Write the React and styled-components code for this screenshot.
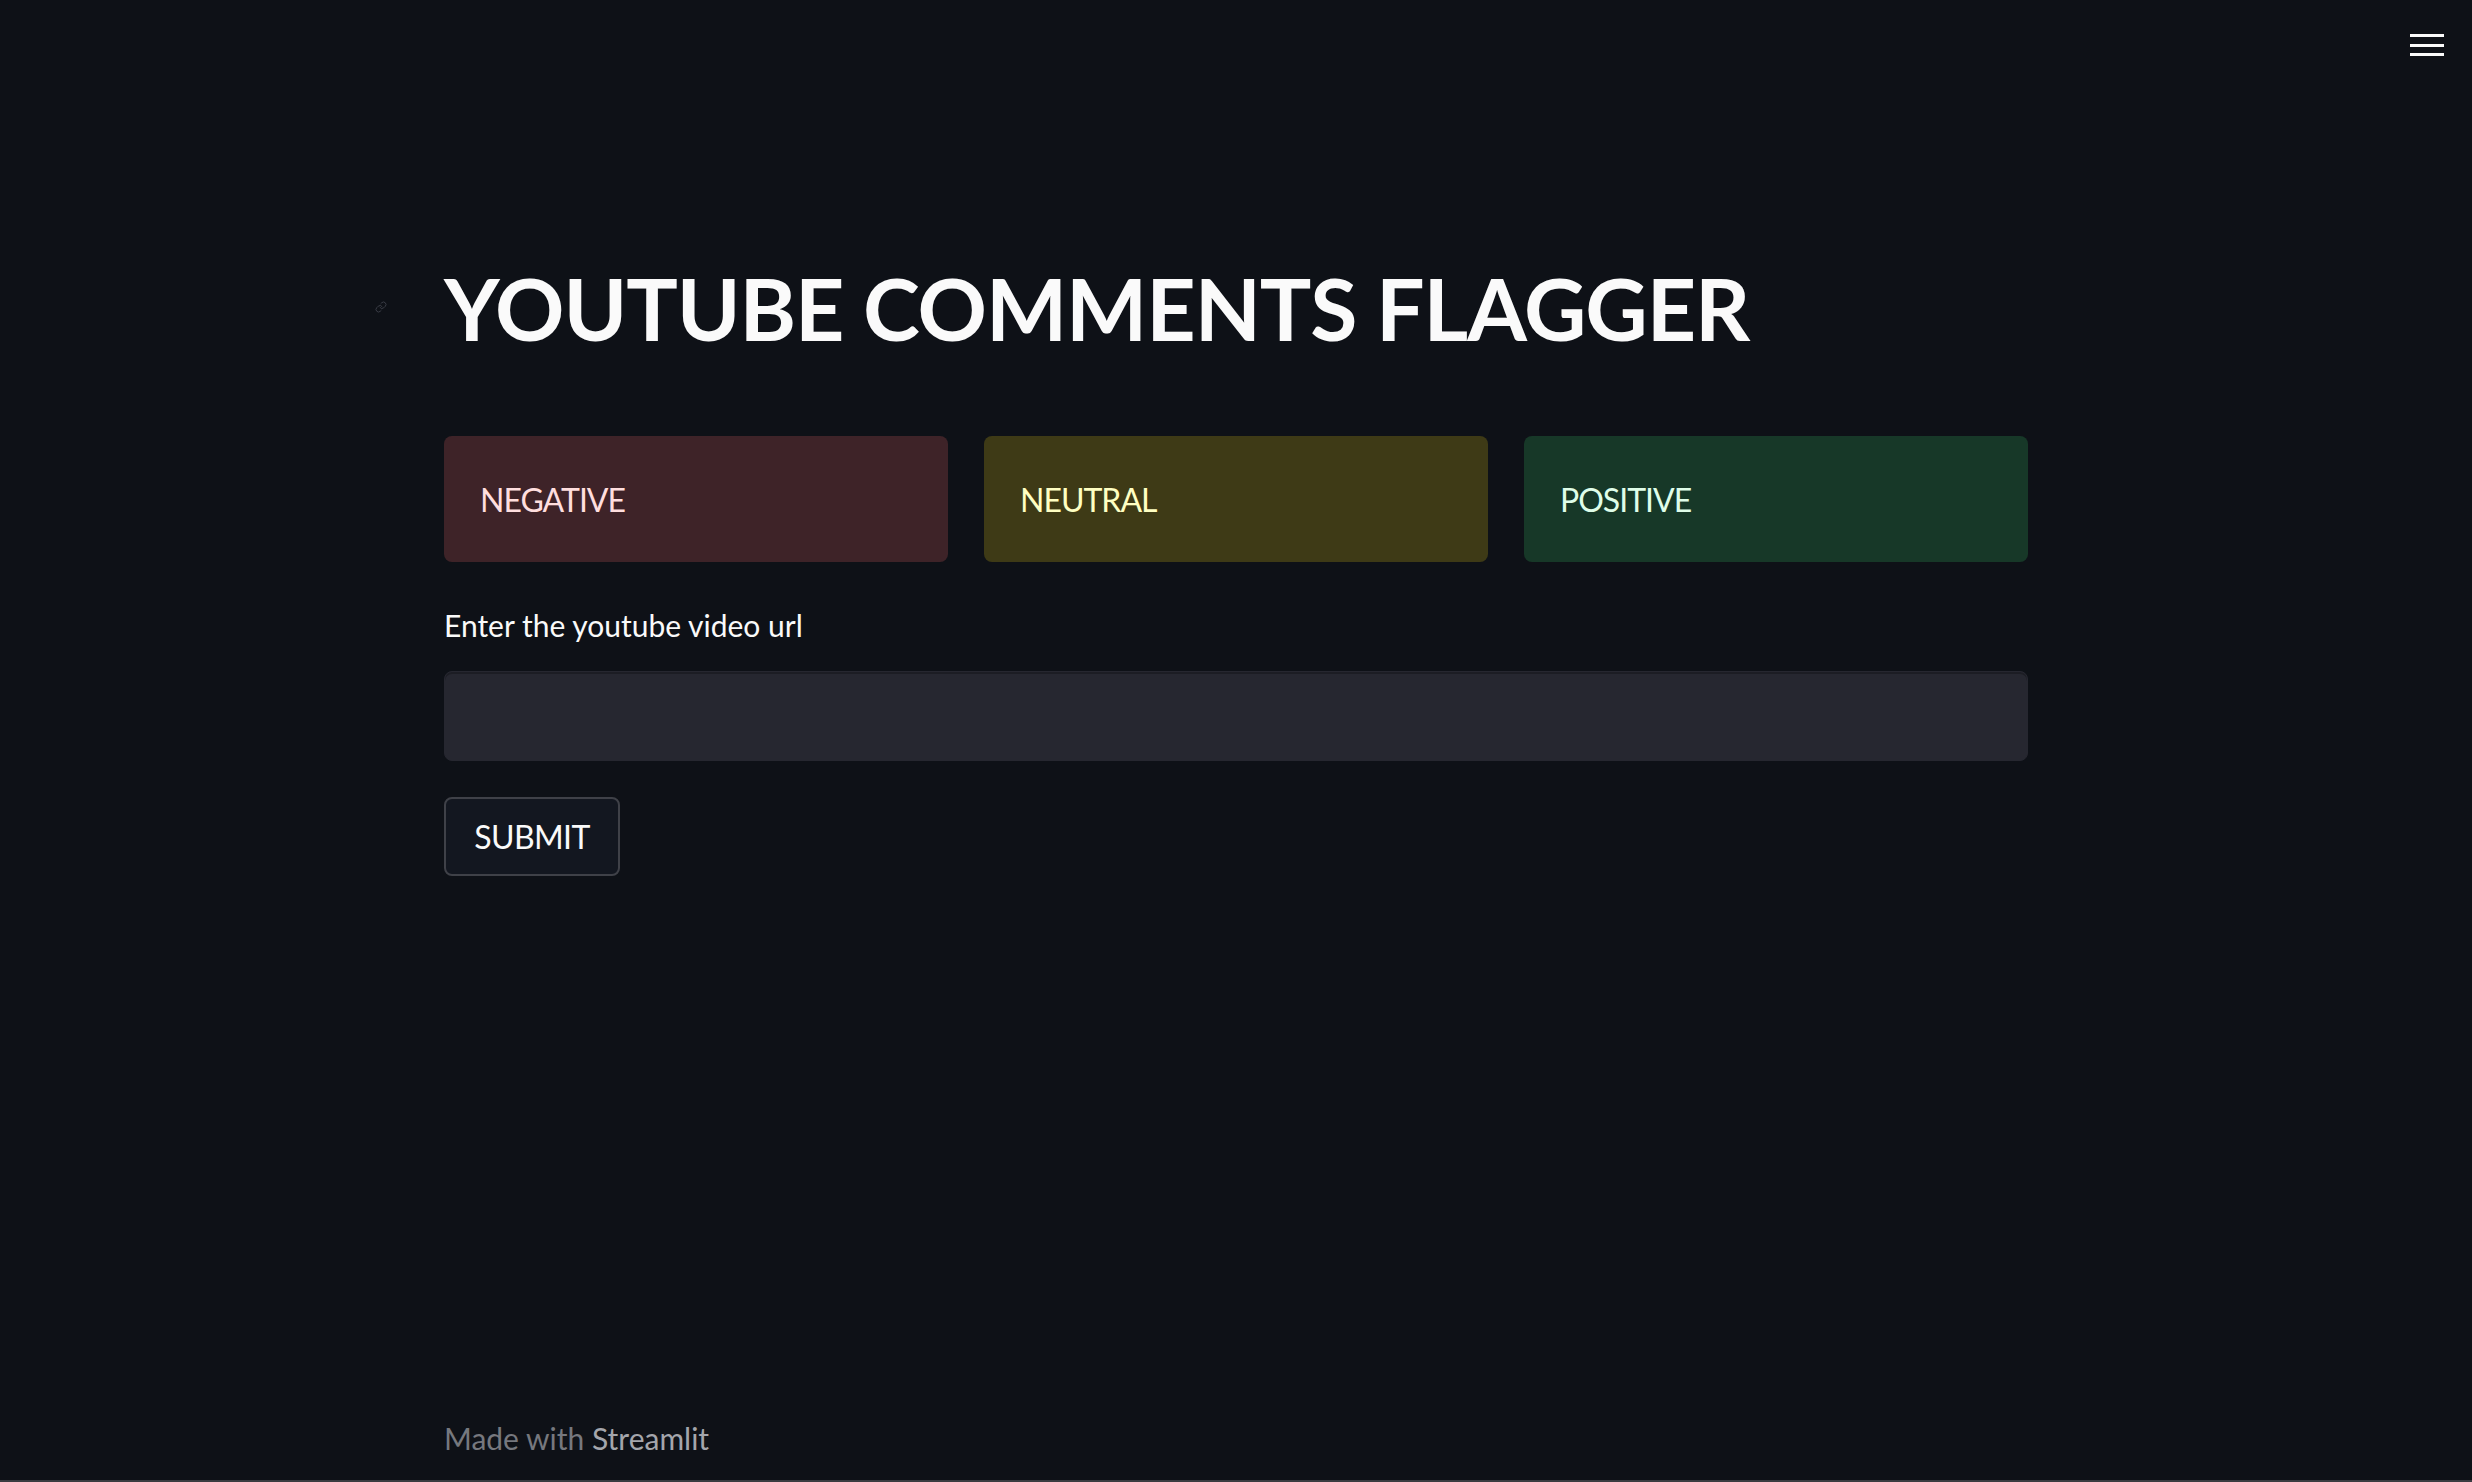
import React from "react";
import styled, { createGlobalStyle } from "styled-components";
import { Link } from "lucide-react";

const GlobalStyle = createGlobalStyle`
  html, body {
    margin: 0;
    padding: 0;
    background: #0e1117;
  }
  body {
    font-family: Lato, "Open Sans", sans-serif;
    color: #fafafa;
  }
  * {
    box-sizing: border-box;
  }
`;

const AppShell = styled.div`
  display: flex;
  flex-direction: column;
  min-height: 100vh;
  background: #0e1117;
  border-bottom: 2px solid #3a3b40;
`;

const Header = styled.header`
  display: flex;
  justify-content: flex-end;
  height: 90px;
  padding: 34px 28px 0 0;
`;

const MenuButton = styled.button`
  display: flex;
  flex-direction: column;
  gap: 6.5px;
  width: 34px;
  height: 24px;
  padding: 0;
  border: none;
  background: transparent;
  cursor: pointer;
`;

const MenuBar = styled.span`
  display: block;
  width: 34px;
  height: 3px;
  background: #fafafa;
`;

const Main = styled.main`
  flex: 1;
  width: 1584px;
  margin: 0 auto;
  padding-top: 166px;
`;

const Title = styled.h1`
  position: relative;
  margin: 0 0 77px;
  font-size: 86px;
  line-height: 1.2;
  font-weight: 700;
  letter-spacing: -1.1px;
  color: #fafafa;
`;

const Anchor = styled.a`
  position: absolute;
  left: -69px;
  top: 45px;
  display: flex;
  color: #3a3d46;
`;

const AlertRow = styled.div`
  display: grid;
  grid-template-columns: repeat(3, 1fr);
  gap: 36px;
  margin-bottom: 45px;
`;

const tones = {
  negative: { bg: "rgba(255, 108, 108, 0.2)", fg: "#ffdede" },
  neutral: { bg: "rgba(255, 227, 18, 0.2)", fg: "#ffffc2" },
  positive: { bg: "rgba(61, 213, 109, 0.2)", fg: "#dffde9" },
};

const Alert = styled.div`
  display: flex;
  align-items: center;
  height: 126px;
  padding: 0 36px;
  border-radius: 8px;
  background: ${(p) => tones[p.$tone].bg};
  color: ${(p) => tones[p.$tone].fg};
  font-size: 32px;
  letter-spacing: -1px;
`;

const Label = styled.label`
  display: block;
  margin-bottom: 28px;
  font-size: 30px;
  line-height: 1.2;
  color: #fafafa;
`;

const UrlInput = styled.input`
  display: block;
  width: 100%;
  height: 90px;
  margin-bottom: 36px;
  padding: 0 24px;
  border: 1px solid #262730;
  border-radius: 8px;
  background: #262730;
  box-shadow: inset 0 2px 0 #1c1d24;
  color: #fafafa;
  font-family: inherit;
  font-size: 33px;
  outline: none;
`;

const SubmitButton = styled.button`
  width: 176px;
  height: 79px;
  border: 2px solid #3f4148;
  border-radius: 8px;
  background: #131720;
  color: #fafafa;
  font-family: inherit;
  font-size: 32px;
  letter-spacing: -0.6px;
  cursor: pointer;
`;

const Footer = styled.footer`
  width: 1584px;
  margin: 0 auto;
  padding-bottom: 24px;
  font-size: 30px;
  line-height: 1.2;
  color: #76787e;
`;

const FooterLink = styled.a`
  color: #a4a6ac;
  text-decoration: none;
`;

const App = () => (
  <AppShell>
    <GlobalStyle />
    <Header>
      <MenuButton aria-label="menu">
        <MenuBar />
        <MenuBar />
        <MenuBar />
      </MenuButton>
    </Header>
    <Main>
      <Title>
        <Anchor href="#youtube-comments-flagger">
          <Link size={12} strokeWidth={2} />
        </Anchor>
        YOUTUBE COMMENTS FLAGGER
      </Title>
      <AlertRow>
        <Alert $tone="negative">NEGATIVE</Alert>
        <Alert $tone="neutral">NEUTRAL</Alert>
        <Alert $tone="positive">POSITIVE</Alert>
      </AlertRow>
      <Label htmlFor="url">Enter the youtube video url</Label>
      <UrlInput id="url" type="text" />
      <SubmitButton>SUBMIT</SubmitButton>
    </Main>
    <Footer>
      Made with <FooterLink href="#">Streamlit</FooterLink>
    </Footer>
  </AppShell>
);

export default App;
